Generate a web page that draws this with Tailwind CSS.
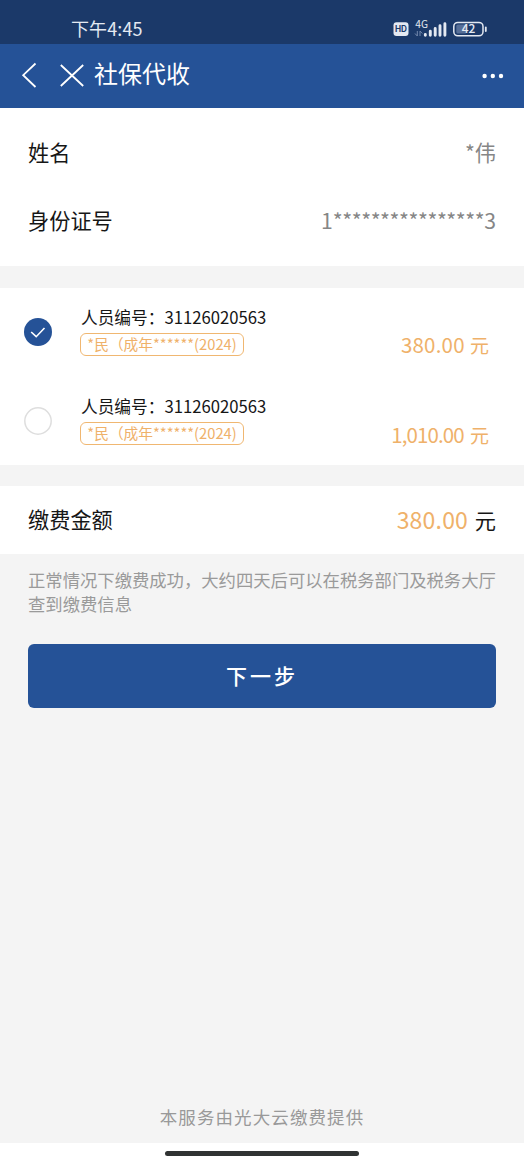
<!DOCTYPE html>
<html lang="zh-CN">
<head>
<meta charset="utf-8">
<title>社保代收</title>
<script src="https://cdn.jsdelivr.net/npm/@tailwindcss/browser@4"></script>
</head>
<body class="bg-[#f4f4f4] font-['Noto_Sans_CJK_SC',sans-serif] text-[#161616]">
<div class="flex h-[1164px] w-[524px] flex-col overflow-hidden whitespace-nowrap">
  <div class="flex h-11 shrink-0 items-center justify-between bg-[#1b3969] pl-[71px] pr-[37px] pt-3 text-[#e4e9f2]">
    <span class="text-[18px] leading-7 tracking-[0.1px]">下午4:45</span>
    <svg class="h-[22px] w-[95px]" viewBox="392 17 95 22" fill="none">
      <rect x="393.5" y="22.3" width="15" height="13.7" rx="3" fill="#e4e9f2"/>
      <text x="401" y="32.4" text-anchor="middle" font-family="Inter" font-weight="700" font-size="8.5" textLength="12" lengthAdjust="spacingAndGlyphs" fill="#1b3969">HD</text>
      <text x="415.3" y="27.8" font-family="Noto Sans CJK SC" font-size="10.5" textLength="12.7" lengthAdjust="spacingAndGlyphs" fill="#e4e9f2">4G</text>
      <path d="M417.3 31v5M415 33.5l2.3 2.5M420 36v-5l2.3 2.5" stroke="#7489ad" stroke-width="1"/>
      <path d="M425.3 35.3v-.8M430.3 35.3v-4M435.2 35.3v-6.8M440 35.3v-9.5M444.9 35.3V23.7" stroke="#e4e9f2" stroke-width="2.9" stroke-linecap="round"/>
      <rect x="453.8" y="22.4" width="29.2" height="13.4" rx="4" stroke="#e4e9f2" stroke-width="1.5"/>
      <rect x="456.3" y="24.6" width="10" height="9" rx="1.5" fill="#576f98"/>
      <path d="M485.8 27.5v3.5" stroke="#e4e9f2" stroke-width="1.8" stroke-linecap="round"/>
      <text x="468.5" y="33.4" text-anchor="middle" font-family="Noto Sans CJK SC" font-weight="500" font-size="12" fill="#e4e9f2">42</text>
    </svg>
  </div>
  <div class="flex h-16 shrink-0 items-center bg-[#255297] pl-5 pr-5 text-white">
    <svg class="h-7 w-[66px]" viewBox="20 62 66 28" fill="none" stroke="currentColor" stroke-width="1.8"><path d="M35.5 63.5 23.2 75.2 35.5 87M60.8 65 83.2 86M83.2 65 60.8 86"/></svg>
    <h1 class="ml-2 pb-1.5 text-[24px] font-normal leading-8">社保代收</h1>
    <svg class="ml-auto h-5 w-[22px]" viewBox="0 0 22 20" fill="currentColor"><circle cx="2.6" cy="10" r="2.2"/><circle cx="10.8" cy="10" r="2.2"/><circle cx="19" cy="10" r="2.2"/></svg>
  </div>
  <section class="flex h-[158px] shrink-0 flex-col bg-white px-7 pt-[10px] text-[21.2px]">
    <div class="flex h-[68px] items-center justify-between"><span>姓名</span><span class="text-[#868686]">*伟</span></div>
    <div class="flex h-[68px] items-center justify-between"><span>身份证号</span><span class="text-[#868686]">1<span class="tracking-[-0.43px]">****************</span>3</span></div>
  </section>
  <section class="mt-[22px] flex h-[177px] shrink-0 flex-col bg-white pl-6 pr-[35px]">
    <div class="flex h-[88px] items-center">
      <svg class="h-7 w-7" viewBox="0 0 28 28" fill="none"><circle cx="14" cy="14" r="14" fill="#255297"/><path d="m7.2 14 5 4.7 8.3-8.7" stroke="#fff" stroke-width="1.6"/></svg>
      <div class="ml-7 flex flex-col pb-[3px]">
        <span class="pl-px text-[16.7px] leading-6">人员编号：31126020563</span>
        <span class="mt-1 flex h-[23px] w-[164px] items-center justify-center rounded-[6px] border-[1.5px] border-[#f0b771] text-[14.7px] leading-none text-[#efb16a]">*民（成年******(2024)</span>
      </div>
      <span class="ml-auto pt-6 text-[19px] leading-7 text-[#efb16a]"><span class="mr-px text-[20.5px] tracking-[0.2px]">380.00</span> 元</span>
    </div>
    <div class="flex h-[89px] items-center">
      <svg class="h-7 w-7" viewBox="0 0 28 28" fill="none"><circle cx="14" cy="14" r="13.2" stroke="#dedede" stroke-width="1.5"/></svg>
      <div class="ml-7 flex flex-col pb-[3px]">
        <span class="pl-px text-[16.7px] leading-6">人员编号：31126020563</span>
        <span class="mt-1 flex h-[23px] w-[164px] items-center justify-center rounded-[6px] border-[1.5px] border-[#f0b771] text-[14.7px] leading-none text-[#efb16a]">*民（成年******(2024)</span>
      </div>
      <span class="ml-auto pt-[27px] text-[19px] leading-7 text-[#efb16a]"><span class="mr-0.5 text-[20.5px] tracking-[-0.9px]">1,010.00</span> 元</span>
    </div>
  </section>
  <section class="mt-[21px] flex h-[68px] shrink-0 items-center justify-between bg-white px-7 pb-0.5 text-[21.2px]">
    <span>缴费金额</span><span><span class="mr-0.5 text-[23px] tracking-[0.2px] text-[#efb16a]">380.00</span> 元</span>
  </section>
  <p class="mx-7 mt-[14px] text-[17.33px] leading-6 text-[#9a9a9a]">正常情况下缴费成功，大约四天后可以在税务部门及税务大厅<br>查到缴费信息</p>
  <button class="mx-7 mt-7 flex h-16 shrink-0 items-center justify-center rounded-[6px] bg-[#255297] text-[21px] font-medium tracking-[3px] text-white">下一步</button>
  <footer class="mt-auto flex h-[51px] shrink-0 items-center justify-center text-[17.5px] tracking-[1.1px] text-[#999]">本服务由光大云缴费提供</footer>
  <div class="flex h-[21px] shrink-0 justify-center bg-white pt-2"><div class="h-[5px] w-[194px] rounded-full bg-[#303333]"></div></div>
</div>
</body>
</html>
